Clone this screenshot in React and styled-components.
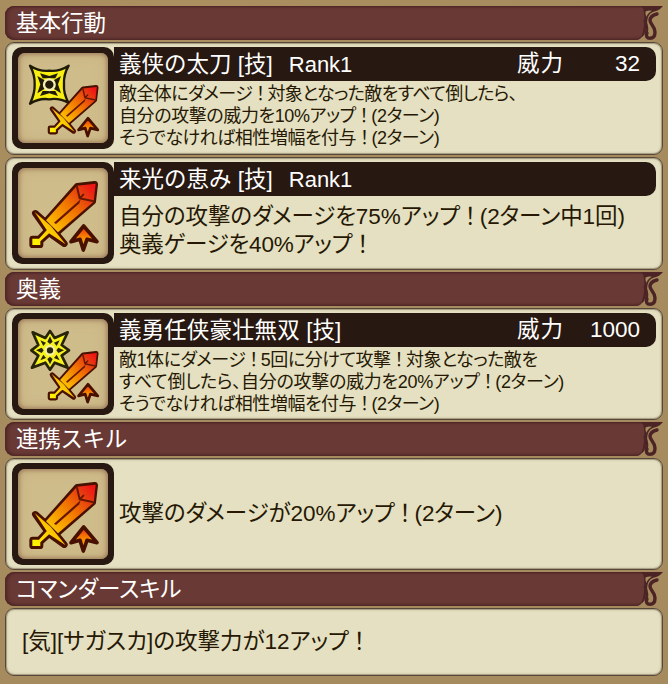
import React from 'react'
import styled, { createGlobalStyle, css } from 'styled-components'

const theme = {
  ground: '#a58b5e',
  header: '#693a35',
  headerEdge: '#4c2426',
  panel: '#e4e0c1',
  panelBorder: '#57463a',
  plate: '#271812',
  text: '#261804',
  textLight: '#ffffff',
}

const GlobalStyle = createGlobalStyle`
  body {
    margin: 0;
    background: ${theme.ground};
  }
  * {
    box-sizing: border-box;
  }
`

const font = css`
  font-family: 'Liberation Sans', 'Noto Sans CJK JP', sans-serif;
  white-space: pre;
`

const Page = styled.main`
  ${font};
  display: flex;
  flex-direction: column;
  gap: 2px;
  width: 668px;
  height: 684px;
  padding: 6px 5px 8px;
  background:
    radial-gradient(ellipse at 30% 0, rgba(190, 155, 100, 0.25), transparent 60%),
    ${theme.ground};
  overflow: hidden;
`

const Header = styled.header`
  display: flex;
  flex: none;
  height: 34px;
`

const HeaderBody = styled.h2`
  width: 638px;
  margin: 0;
  padding-left: 11px;
  border-radius: 9px 0 7px 9px;
  background: ${theme.header};
  box-shadow:
    inset 3px 0 4px -1px ${theme.headerEdge},
    inset 0 2px 2px -1px ${theme.headerEdge},
    inset 0 -2px 3px -1px ${theme.headerEdge};
  color: ${theme.textLight};
  font-size: 22.5px;
  font-weight: 400;
  line-height: 36px;
  letter-spacing: ${({ spacing }) => spacing || 0}px;
`

const Ornament = styled.svg`
  display: block;
  width: 24px;
  height: 34px;
  margin-left: -4px;
`

const Panel = styled.section`
  display: flex;
  flex: none;
  height: ${({ height }) => height}px;
  padding: 4px 6px;
  border: 1px solid ${theme.panelBorder};
  border-radius: 9px;
  background: ${theme.panel};
  box-shadow:
    inset 0 0 0 1px #a99f83,
    inset 0 0 3px rgba(90, 75, 50, 0.5);
`

const IconFrame = styled.div`
  flex: none;
  width: 102px;
  height: 102px;
  padding: 6px;
  border-radius: 10px;
  background: ${theme.plate};
`

const IconFace = styled.div`
  width: 90px;
  height: 90px;
  border-radius: 7px;
  background: #cfbc8b;
  box-shadow:
    inset 0 0 4px 1px #9a7657,
    inset 0 0 14px rgba(160, 125, 80, 0.3);
`

const Drawing = styled.svg`
  display: block;
  width: 90px;
  height: 90px;
`

const Content = styled.div`
  flex: 1;
  min-width: 0;
`

const TitleBar = styled.div`
  display: flex;
  align-items: flex-start;
  height: 34px;
  padding: 0 16px 0 5px;
  border-radius: 0 10px 10px 0;
  background: ${theme.plate};
  color: ${theme.textLight};
  font-size: 22.5px;
  line-height: 34px;
`

const Name = styled.span`
  flex: 1;
  line-height: 36px;
  letter-spacing: ${({ spacing }) => spacing || 0}px;
`

const Rank = styled.span`
  margin-left: 16px;
  font-size: 22px;
  letter-spacing: 0;
`

const Power = styled.span`
  letter-spacing: 1px;
`

const PowerValue = styled.span`
  width: 76px;
  text-align: right;
`

const Lines = styled.div`
  padding: ${({ large }) => (large ? '7px 0 0 5px' : '2px 0 0 5px')};
  color: ${theme.text};
  font-size: ${({ large }) => (large ? 22.5 : 18)}px;
  line-height: ${({ large }) => (large ? 28 : 22)}px;
`

const LineStyled = styled.div`
  font-feature-settings: 'palt';
  letter-spacing: ${({ spacing }) => spacing || 0}px;
`

// full-width exclamation mark, keeps its side bearings inside tight text
const Mark = styled.span`
  font-feature-settings: normal;
  margin: 0 -0.08em 0 -0.04em;
`

const Single = styled.div`
  align-self: center;
  padding-left: ${({ inset }) => inset}px;
  color: ${theme.text};
  font-size: 22.5px;
  line-height: 28px;
`

const Line = ({ children, spacing }) => (
  <LineStyled spacing={spacing}>
    {children.split('！').map((part, i) => (
      <React.Fragment key={i}>
        {i > 0 && <Mark>！</Mark>}
        {part}
      </React.Fragment>
    ))}
  </LineStyled>
)

const SectionHeader = ({ children, spacing, tight }) => (
  <Header>
    <HeaderBody spacing={spacing}>
      {tight ? <Line spacing={spacing}>{children}</Line> : children}
    </HeaderBody>
    <Ornament viewBox="0 0 24 34" fill="none" strokeLinecap="round">
      <path
        d="M3 0H24C21 4 17 5 14 6C11 7 9 10 8.5 13C8 17 8 20 6.5 24C6 27 5 30 3 31Z"
        fill={theme.headerEdge}
      />
      <path d="M0 2H4C6 8 6 20 3 29L0 31Z" fill={theme.header} />
      <path d="M6.5 5.5Q10 4 13 4.8Q8.5 7 7.5 11Q6 8 6.5 5.5Z" fill={theme.ground} />
      <path
        d="M18 8C14 9 11 11 11 14.5C11.5 19 16 20 16 26C16 30 14 32.3 11 32.3C8 32.3 6.5 30 8 27"
        stroke={theme.headerEdge}
        strokeWidth="3.4"
      />
      <path d="M6 15Q9 22 7 28" stroke={theme.headerEdge} strokeWidth="3" />
    </Ornament>
  </Header>
)

const Sword = ({ id, transform }) => (
  <g transform={transform} strokeLinejoin="round" strokeLinecap="round">
    <defs>
      <linearGradient id={id} gradientUnits="userSpaceOnUse" x1="56" y1="222" x2="226" y2="58">
        <stop offset="0" stopColor="#fff200" />
        <stop offset="0.3" stopColor="#fbb800" />
        <stop offset="0.6" stopColor="#f27800" />
        <stop offset="0.85" stopColor="#e63c10" />
        <stop offset="1" stopColor="#f01414" />
      </linearGradient>
      <linearGradient id={`${id}-up`} x1="0" y1="0" x2="0" y2="1">
        <stop offset="0" stopColor="#ee2a10" />
        <stop offset="0.5" stopColor="#f78a00" />
        <stop offset="1" stopColor="#ffd800" />
      </linearGradient>
    </defs>
    <g stroke="#481000" strokeWidth="20">
      <path d="M178 55L230 49L224 100L119 191L86 158Z" />
      <path d="M52 136L97 176L139 227L94 195Z" />
      <path d="M92 184L64 213H44V230H66V219L98 190Z" />
    </g>
    <g fill={`url(#${id})`}>
      <path d="M177 53L233 47L227 101L120 193L84 157Z" />
      <path d="M50 132L98 173L143 229L92 195Z" />
      <path d="M90 182L63 212H43V231H67V220L100 190Z" />
    </g>
    <path
      d="M177 56L185 91L227 100M185 91L196 80"
      stroke="#681600"
      strokeWidth="6"
      fill="none"
    />
    <path d="M188 94L184 106L114 168L108 164Z" fill="#681600" />
    <path
      d="M197 174L237 221L207 214L196 246L186 214L159 221Z"
      fill={`url(#${id}-up)`}
      stroke="#481000"
      strokeWidth="11"
    />
  </g>
)

const Shuriken = () => (
  <g strokeLinejoin="round">
    <path
      d="M36 38Q64 56 94 53Q124 56 152 38Q136 66 138 94Q136 122 152 150Q124 134 94 139Q64 134 36 152Q51 122 50 94Q51 66 36 38Z"
      fill="#f8ee10"
      stroke="#201a08"
      strokeWidth="7"
    />
    <path
      d="M66 61L94 69L120 61L112 76H74ZM66 129L94 121L120 129L112 114H74ZM58 69L67 94L58 121L80 107V82ZM129 69L120 94L129 121L107 107V82Z"
      fill="#201a08"
    />
    <circle cx="94" cy="95" r="16" fill="#201a08" stroke="#f5efb0" strokeWidth="7" />
  </g>
)

const Starburst = () => (
  <g strokeLinejoin="round">
    <path
      d="M44 40L82 57L96 36L110 57L149 40L131 78L153 94L131 110L149 146L110 131L96 152L82 131L42 146L61 110L40 94L61 78Z"
      fill="#f8f21c"
      stroke="#27240a"
      strokeWidth="8"
    />
    <path
      d="M96 52L104 68L96 75L88 68ZM96 136L104 120L96 113L88 120ZM54 94L71 86L77 94L71 102ZM138 94L121 86L115 94L121 102ZM67 64L84 71L76 81ZM125 64L108 71L116 81ZM67 124L84 117L76 107ZM125 124L108 117L116 107Z"
      fill="#27240a"
    />
    <circle cx="96" cy="94" r="13" fill="#27240a" stroke="#f5f19a" strokeWidth="7" />
  </g>
)

const SkillIcon = ({ id, kind }) => (
  <IconFrame>
    <IconFace>
      <Drawing viewBox="0 0 270 270">
        {kind === 'shuriken' && <Shuriken />}
        {kind === 'starburst' && <Starburst />}
        <Sword id={id} transform={kind ? 'translate(64 67) scale(0.74)' : undefined} />
      </Drawing>
    </IconFace>
  </IconFrame>
)

const Title = ({ name, rank, power, spacing }) => (
  <TitleBar>
    <Name spacing={spacing}>
      {name}
      {rank && <Rank>{rank}</Rank>}
    </Name>
    {power && <Power>威力</Power>}
    {power && <PowerValue>{power}</PowerValue>}
  </TitleBar>
)

const App = () => (
  <>
    <GlobalStyle />
    <Page>
      <SectionHeader>基本行動</SectionHeader>
      <Panel height={113}>
        <SkillIcon id="basic-1" kind="shuriken" />
        <Content>
          <Title name="義侠の太刀 [技]" rank="Rank1" power="32" />
          <Lines>
            <Line spacing={-0.6}>敵全体にダメージ！対象となった敵をすべて倒したら、</Line>
            <Line spacing={-0.4}>自分の攻撃の威力を10%アップ！(2ターン)</Line>
            <Line spacing={-0.48}>そうでなければ相性増幅を付与！(2ターン)</Line>
          </Lines>
        </Content>
      </Panel>
      <Panel height={113}>
        <SkillIcon id="basic-2" />
        <Content>
          <Title name="来光の恵み [技]" rank="Rank1" />
          <Lines large>
            <Line spacing={-0.05}>自分の攻撃のダメージを75%アップ！(2ターン中1回)</Line>
            <Line spacing={-0.2}>奥義ゲージを40%アップ！</Line>
          </Lines>
        </Content>
      </Panel>
      <SectionHeader>奥義</SectionHeader>
      <Panel height={112}>
        <SkillIcon id="secret" kind="starburst" />
        <Content>
          <Title name="義勇任侠豪壮無双 [技]" power="1000" spacing={0.1} />
          <Lines>
            <Line spacing={-0.45}>敵1体にダメージ！5回に分けて攻撃！対象となった敵を</Line>
            <Line spacing={-0.28}>すべて倒したら、自分の攻撃の威力を20%アップ！(2ターン)</Line>
            <Line spacing={-0.48}>そうでなければ相性増幅を付与！(2ターン)</Line>
          </Lines>
        </Content>
      </Panel>
      <SectionHeader spacing={-0.3}>連携スキル</SectionHeader>
      <Panel height={112}>
        <SkillIcon id="link" />
        <Single inset={5}>
          <Line spacing={-0.05}>攻撃のダメージが20%アップ！(2ターン)</Line>
        </Single>
      </Panel>
      <SectionHeader tight>コマンダースキル</SectionHeader>
      <Panel height={68}>
        <Single inset={10}>
          <Line>[気][サガスカ]の攻撃力が12アップ！</Line>
        </Single>
      </Panel>
    </Page>
  </>
)

export default App
